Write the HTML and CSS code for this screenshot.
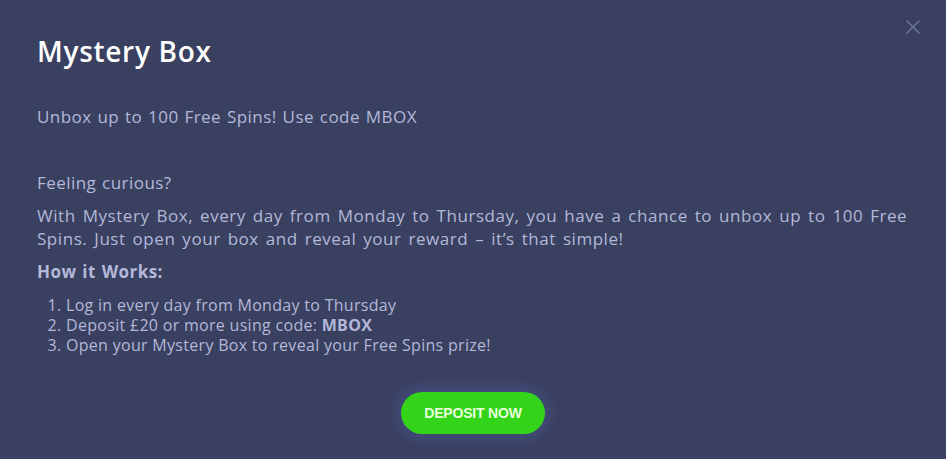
FILE: index.html
```html
<!DOCTYPE html>
<html>
<head>
<meta charset="utf-8">
<link rel="stylesheet" href="styles.css">
</head>
<body>
<div class="modal">
  <button class="close" aria-label="Close">
    <svg width="14" height="14" viewBox="0 0 14 14"><path d="M1 1L13 13M13 1L1 13" stroke="#6c7499" stroke-width="1.6" stroke-linecap="round"/></svg>
  </button>
  <h1 class="title">Mystery Box</h1>
  <p class="subtitle">Unbox up to 100 Free Spins! Use code MBOX</p>
  <p class="lead">Feeling curious?</p>
  <p class="para">With Mystery Box, every day from Monday to Thursday, you have a chance to unbox up to 100 Free Spins. Just open your box and reveal your reward – it’s that simple!</p>
  <p class="how">How it Works:</p>
  <ol class="steps">
    <li>Log in every day from Monday to Thursday</li>
    <li>Deposit £20 or more using code: <b>MBOX</b></li>
    <li>Open your Mystery Box to reveal your Free Spins prize!</li>
  </ol>
  <div class="actions">
    <button class="deposit">DEPOSIT NOW</button>
  </div>
</div>
</body>
</html>
```
FILE: styles.css
```css
html, body {
  margin: 0;
  padding: 0;
  background: #3a405f;
  width: 946px;
  height: 459px;
  overflow: hidden;
}
.modal {
  position: relative;
  padding: 35px 37px 0 37px;
  font-family: "Open Sans", "Noto Sans", sans-serif;
  color: #b3b8da;
}
.close {
  position: absolute;
  top: 20px;
  right: 26px;
  background: none;
  border: 0;
  padding: 0;
  width: 14px;
  height: 14px;
  cursor: pointer;
}
.close svg { display: block; }
.title {
  margin: 0;
  font-size: 28px;
  line-height: 32px;
  font-weight: 600;
  color: #ffffff;
  letter-spacing: 0.7px;
}
.subtitle, .lead, .para, .how {
  font-size: 17px;
  line-height: 23px;
  letter-spacing: 0.45px;
  word-spacing: 1px;
}
.subtitle { margin: 38px 0 0 0; }
.lead { margin: 43px 0 0 0; }
.para {
  margin: 10px 0 0 0;
  max-width: 880px;
  letter-spacing: 0.55px;
  word-spacing: 2px;
}
.how {
  margin: 10px 0 0 0;
  font-weight: 700;
}
.steps {
  margin: 12px 0 0 0;
  padding-left: 29px;
  font-size: 16px;
  line-height: 20px;
  letter-spacing: 0.3px;
}
.steps b { font-weight: 700; }
.actions {
  display: flex;
  justify-content: center;
  margin-top: 37px;
}
.deposit {
  width: 144px;
  height: 42px;
  border: 0;
  border-radius: 21px;
  background: #34d41a;
  color: #e6ffda;
  font-family: "Liberation Sans", Arial, sans-serif;
  font-weight: 700;
  font-size: 14px;
  letter-spacing: -0.2px;
  box-shadow: 0 0 16px 4px rgba(90, 110, 200, 0.35);
  cursor: pointer;
}
```
